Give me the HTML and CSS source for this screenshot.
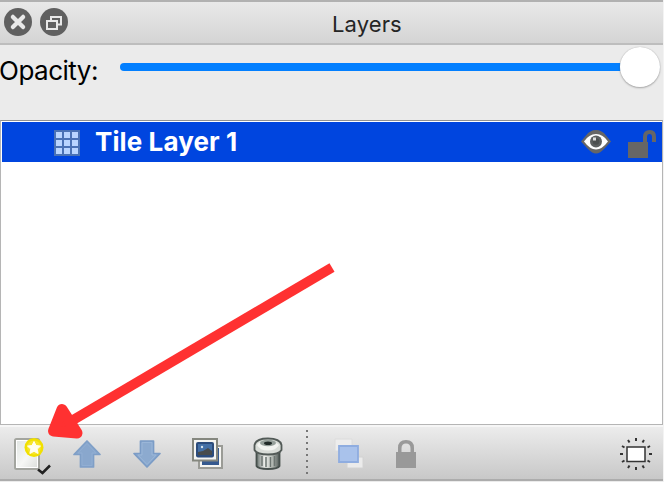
FILE: index.html
```
<!DOCTYPE html>
<html lang="en">
<head>
<meta charset="utf-8">
<title>Layers</title>
<link rel="stylesheet" href="styles.css">
</head>
<body>
<main class="panel">
  <header class="titlebar">
    <svg class="round" viewBox="0 0 28 28"><circle cx="14" cy="14" r="14" fill="#606060"/><path d="M8.900 8.900 19.100 19.100M19.100 8.900 8.900 19.100" stroke="#e8e8e8" stroke-width="4.300" stroke-linecap="round"/></svg>
    <svg class="round" viewBox="0 0 28 28"><circle cx="14" cy="14" r="14" fill="#606060"/><path d="M11 12V9H21V16.500H18M7 13H17V21H7Z" fill="none" stroke="#e8e8e8" stroke-width="2"/></svg>
    <h1 class="title">Layers</h1>
  </header>
  <div class="opacity">
    <span class="label">Opacity:</span>
    <div class="track"><div class="knob"></div></div>
  </div>
  <section class="list">
    <div class="row">
      <svg class="grid" viewBox="0 0 26 26"><path d="M0 0H26V26H0Z" fill="#4a72b5"/><path d="M2 2h6v6H2zm8 0h6v6h-6zm8 0h6v6h-6zM2 10h6v6H2zm8 0h6v6h-6zm8 0h6v6h-6zM2 18h6v6H2zm8 0h6v6h-6zm8 0h6v6h-6z" fill="#b9d5ff"/></svg>
      <span class="name">Tile Layer 1</span>
      <svg class="eye" viewBox="0 0 32 26"><path d="M1 12.500 6 6.500Q10 1 16 1T26 6.500L31 12.500 25 19Q20 24.500 16 24.500T7 19Z" fill="#666"/><path d="M4 12.500Q9 5 16 5T28 12.500Q22 20.500 16 20.500T4 12.500Z" fill="#fff"/><circle cx="16" cy="12.500" r="6" fill="#5d6060"/><circle cx="16" cy="12.500" r="3.300" fill="#4c4f4f"/><path d="M13 8.500h3v3h-3z" fill="#ddd"/></svg>
      <svg class="unlock" viewBox="0 0 30 28"><path d="M0 12H20V28H0ZM15 12V7Q15 0 22 0Q28 0 28 7V12H24V7Q24 4 21.500 4Q19 4 19 7V12Z" fill="#666"/></svg>
    </div>
  </section>
  <footer class="toolbar">
    <svg class="tool new" viewBox="0 0 40 40">
      <defs><linearGradient id="paper" x2="1" y2="1"><stop stop-color="#dfe4e1"/><stop offset=".55" stop-color="#f6f7f5"/><stop offset="1" stop-color="#d9dcd8"/></linearGradient></defs>
      <rect x="4" y="4" width="24" height="30" rx="1.500" fill="url(#paper)" stroke="#a3a59f" stroke-width="2"/><rect x="5.500" y="5.500" width="21" height="27" fill="none" stroke="#fff"/>
      <circle cx="23" cy="12.500" r="9.500" fill="#f1e000"/><circle cx="23" cy="12.500" r="7" fill="#f7e52a"/>
      <path d="M23 6.500l2 4 4.500.6-3.300 3 .9 4.400-4.100-2.200-4.100 2.200.9-4.400-3.300-3 4.500-.6z" fill="#fffef0" stroke="#fffef0" stroke-linejoin="round"/>
      <path d="M27 34.500 31.500 38 39 30.500" fill="none" stroke="#222" stroke-width="2.500"/>
    </svg>
    <svg class="tool up" viewBox="0 0 30 30"><path d="M15 2 28 15.500H21.500V28H8.500V15.500H2Z" fill="#89a7cd" stroke="#7f9fc7" stroke-width="1.700" stroke-linejoin="round"/><path d="M15 4.500 24 14H20V26.500H10V14H6Z" fill="none" stroke="#91aed3"/></svg>
    <svg class="tool down" viewBox="0 0 30 30"><path d="M15 28 28 14.500H21.500V2H8.500V14.500H2Z" fill="#8caacf" stroke="#7b9cc6" stroke-width="1.700" stroke-linejoin="round"/><path d="M15 25.500 24 16H20V3.500H10V16H6Z" fill="none" stroke="#9ab6d8"/></svg>
    <svg class="tool copy" viewBox="0 0 34 34">
      <path d="M8 9H31V31H8Z" fill="#f5f5f2" stroke="#9a9b96" stroke-width="2"/><path d="M11 11H28V28H11Z" fill="#35598f"/>
      <path d="M2 2H26V23.500H2Z" fill="#f5f5f2" stroke="#85877f" stroke-width="2"/><rect x="5" y="5" width="18" height="15.500" rx="2" fill="#2c4c7c"/><path d="M7 7H21V15H7Z" fill="#4470a6"/><path d="M7 15 12 14 17 11 21 14V18H7Z" fill="#484c4d"/><circle cx="11" cy="10" r="1.200" fill="#d9e4ed"/>
    </svg>
    <svg class="tool trash" viewBox="0 0 30 34">
      <defs><linearGradient id="can"><stop stop-color="#66706d"/><stop offset=".35" stop-color="#eceeea"/><stop offset=".65" stop-color="#bfc5bf"/><stop offset="1" stop-color="#525b58"/></linearGradient></defs>
      <path d="M3.500 14V29Q5 32 15 32T26.500 29V14Z" fill="url(#can)" stroke="#47504d" stroke-width="1.800"/>
      <path d="M9 19V29M13 20V30M17.500 20V30M21.500 19V29" stroke="#6c7571" stroke-width="1.500"/>
      <path d="M1.500 8Q3 1.500 15 1.500T28.500 8V13Q26 17.500 15 17.500T1.500 13Z" fill="#d9ddd8" stroke="#525a57" stroke-width="1.800"/>
      <path d="M4 8Q7 3.500 15 4T26 8Q23 13.500 15 13.500T4 8Z" fill="#f3f4f1"/><ellipse cx="15" cy="6" rx="8" ry="3.200" fill="#96a09b"/><ellipse cx="15" cy="6.300" rx="4" ry="1.800" fill="#222b29"/>
    </svg>
    <svg class="separator" viewBox="0 0 2 46"><path d="M0 0h2v2H0zm0 6h2v2H0zm0 6h2v2H0zm0 6h2v2H0zm0 6h2v2H0zm0 6h2v2H0zm0 6h2v2H0zm0 6h2v2H0z" fill="#777"/></svg>
    <svg class="tool shapes" viewBox="0 0 32 34"><path d="M2 2H19V14H2Z" fill="#ededed" stroke="#dcdcdc"/><path d="M14 20H30V31H14Z" fill="#ebebeb" stroke="#d2d2d2"/><path d="M6 9H25V25H6Z" fill="#a9c2eb" stroke="#8fade0" stroke-width="1.800"/></svg>
    <svg class="tool lock" viewBox="0 0 20 30"><path d="M0 13H2V9Q2 1 10 1T18 9V13H20V29H0ZM5.500 13H14.500V9.500Q14.500 4.500 10 4.500T5.500 9.500Z" fill="#999" fill-rule="evenodd"/></svg>
    <svg class="tool highlight" viewBox="0 0 32 32"><path d="M7 9H25V23.500H7Z" fill="#fff" stroke="#333" stroke-width="1.500"/><path d="M16 0V3M16 29V32M0 16H3M29 16H32M8 2 9.500 4.500M24 2 22.500 4.500M2 8 4.500 9.500M30 8 27.500 9.500M2 24 4.500 22.500M30 24 27.500 22.500M8 30 9.500 27.500M24 30 22.500 27.500" stroke="#333" stroke-width="2"/></svg>
  </footer>
  <svg class="arrow" viewBox="0 0 664 482"><path d="M332 267.500 68 423" stroke="#ff3131" stroke-width="10"/><path d="M62 409.500 53.500 431 77 433Z" fill="#ff3131" stroke="#ff3131" stroke-width="11" stroke-linejoin="round"/></svg>
</main>
</body>
</html>
```

FILE: styles.css
```
* { box-sizing: border-box; }
body { margin: 0; font-family: Inter, "Liberation Sans", sans-serif; }
svg { display: block; flex: none; }
.panel { position: relative; width: 664px; height: 482px; background: #ebebeb; border-right: 1px solid #f3f3f3; overflow: hidden; display: flex; flex-direction: column; }
.titlebar { height: 45px; flex: none; display: flex; align-items: center; gap: 8px; padding: 0 0 1px 4px; border-top: 2px solid #b1b1b1; border-bottom: 2px solid #bdbdbd; background: linear-gradient(#e9e9e9, #d4d4d4); }
.round { width: 28px; height: 28px; }
.title { margin: 4px 0 0 256px; font-size: 22px; line-height: 28px; font-weight: 400; color: #252525; letter-spacing: .1px; }
.opacity { height: 75px; flex: none; display: flex; align-items: flex-start; }
.label { width: 120px; padding-top: 9px; font-size: 26px; line-height: 34px; letter-spacing: -.5px; text-indent: -1px; white-space: nowrap; color: #000; }
.track { position: relative; width: 540px; height: 8px; margin-top: 18px; border-radius: 4px; background: #027fff; }
.knob { position: absolute; right: 0; top: -16px; width: 40px; height: 40px; border-radius: 50%; background: #fff; box-shadow: 0 0 1px #aaa, 0 1px 2px rgba(0,0,0,.3); }
.list { height: 305px; flex: none; border: 1px solid #b5b5b5; border-top-color: #919191; background: #fff; padding: 1px 0 0 1px; }
.row { height: 40px; display: flex; align-items: center; padding-left: 52px; background: #0045df; }
.grid { width: 26px; height: 26px; margin-top: 1px; }
.name { margin-left: 15px; width: 485px; font-size: 26px; font-weight: 700; line-height: 36px; letter-spacing: .1px; color: #fff; }
.eye { width: 32px; height: 26px; }
.unlock { width: 30px; height: 28px; margin: 4px 0 0 16px; }
.toolbar { height: 56px; flex: none; display: flex; align-items: flex-start; border-top: 2px solid #f6f6f6; border-bottom: 2px solid #acacac; background: linear-gradient(#ececec, #c8c8c8); }
.new { width: 40px; height: 40px; margin: 8px 0 0 11px; }
.up { width: 30px; height: 30px; margin: 12px 0 0 21px; }
.down { width: 30px; height: 30px; margin: 12px 0 0 30px; }
.copy { width: 34px; height: 34px; margin: 10px 0 0 29px; }
.trash { width: 30px; height: 34px; margin: 10px 0 0 28px; }
.separator { width: 2px; height: 46px; margin: 3px 0 0 23px; }
.shapes { width: 32px; height: 34px; margin: 10px 0 0 25px; }
.lock { width: 20px; height: 30px; margin: 12px 0 0 31px; }
.highlight { width: 32px; height: 32px; margin: 11px 11px 0 auto; }
.arrow { position: absolute; left: 0; top: 0; width: 664px; height: 482px; }
```
